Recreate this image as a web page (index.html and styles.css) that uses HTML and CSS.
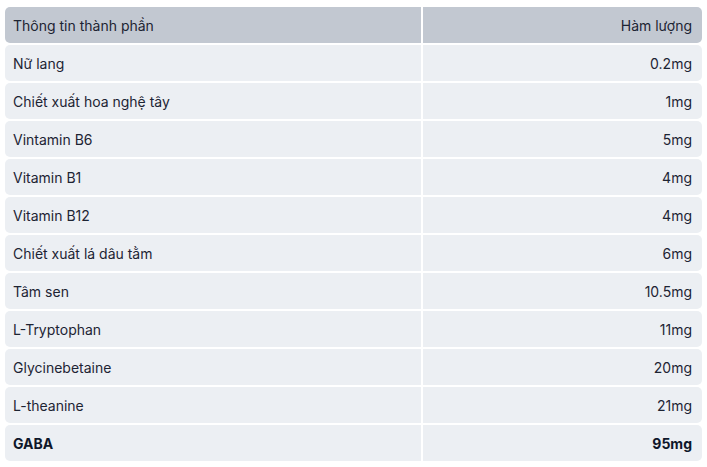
FILE: index.html
```html
<!DOCTYPE html>
<html lang="vi">
<head>
<meta charset="utf-8">
<link rel="stylesheet" href="styles.css">
</head>
<body>
<div class="tbl">
  <div class="row head"><div class="c name">Thông tin thành phần</div><div class="c val">Hàm lượng</div></div>
  <div class="row"><div class="c name">Nữ lang</div><div class="c val">0.2mg</div></div>
  <div class="row"><div class="c name">Chiết xuất hoa nghệ tây</div><div class="c val">1mg</div></div>
  <div class="row"><div class="c name">Vintamin B6</div><div class="c val">5mg</div></div>
  <div class="row"><div class="c name">Vitamin B1</div><div class="c val">4mg</div></div>
  <div class="row"><div class="c name">Vitamin B12</div><div class="c val">4mg</div></div>
  <div class="row"><div class="c name">Chiết xuất lá dâu tằm</div><div class="c val">6mg</div></div>
  <div class="row"><div class="c name">Tâm sen</div><div class="c val">10.5mg</div></div>
  <div class="row"><div class="c name">L-Tryptophan</div><div class="c val">11mg</div></div>
  <div class="row"><div class="c name">Glycinebetaine</div><div class="c val">20mg</div></div>
  <div class="row"><div class="c name">L-theanine</div><div class="c val">21mg</div></div>
  <div class="row bold"><div class="c name">GABA</div><div class="c val">95mg</div></div>
</div>
</body>
</html>
```
FILE: styles.css
```css
html, body { margin: 0; padding: 0; background: #fff; }
body { padding: 7px 5px 0 5px; font-family: Inter, "Noto Sans", sans-serif; font-size: 14px; color: #1d2433; }
.tbl { display: flex; flex-direction: column; gap: 2px; width: 697px; }
.row { display: grid; grid-template-columns: 416px 279px; column-gap: 2px; height: 36px; }
.c { background: #eceff3; display: flex; align-items: center; }
.name { padding-left: 8px; border-radius: 5px 0 0 5px; }
.val { justify-content: flex-end; padding-right: 10px; border-radius: 0 5px 5px 0; }
.head .c { background: #c2c8d1; }
.bold .c { font-weight: 700; color: #0f172a; }
```
